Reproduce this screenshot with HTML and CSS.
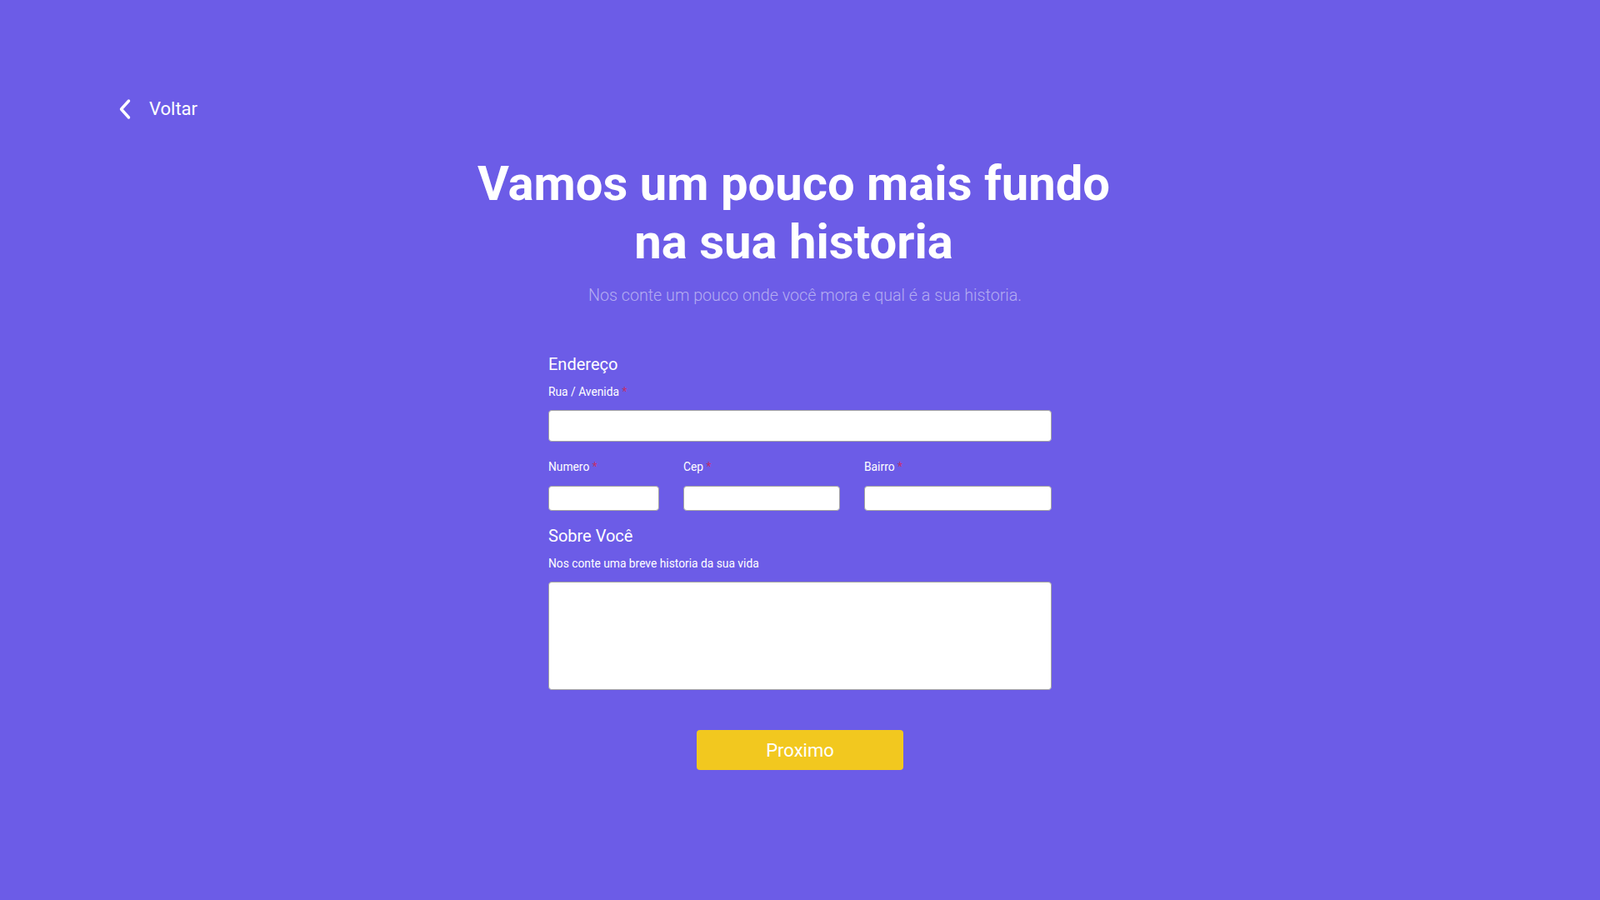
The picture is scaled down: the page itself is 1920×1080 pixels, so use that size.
FILE: index.html
```html
<!DOCTYPE html>
<html lang="pt-BR">
<head>
<meta charset="utf-8">
<title>Sua historia</title>
<link rel="stylesheet" href="styles.css">
</head>
<body>
<div class="page">
  <header class="topbar">
    <a class="back" href="#">
      <svg class="back-icon" width="16" height="26" viewBox="0 0 16 26"><path d="M12.5 3 L3.5 13 L12.5 23" fill="none" stroke="#fff" stroke-width="3.4" stroke-linecap="round" stroke-linejoin="round"/></svg>
      <span>Voltar</span>
    </a>
  </header>
  <main class="content">
    <h1 class="title">Vamos um pouco mais fundo<br>na sua historia</h1>
    <p class="subtitle">Nos conte um pouco onde você mora e qual é a sua historia.</p>
    <form class="form">
      <h2 class="section">Endereço</h2>
      <label class="label">Rua / Avenida <span class="req">*</span></label>
      <input class="input input-lg" type="text">
      <div class="row">
        <div class="field">
          <label class="label">Numero <span class="req">*</span></label>
          <input class="input input-sm" type="text">
        </div>
        <div class="field">
          <label class="label">Cep <span class="req">*</span></label>
          <input class="input input-sm" type="text">
        </div>
        <div class="field">
          <label class="label">Bairro <span class="req">*</span></label>
          <input class="input input-sm" type="text">
        </div>
      </div>
      <h2 class="section section-2">Sobre Você</h2>
      <label class="label">Nos conte uma breve historia da sua vida</label>
      <textarea class="textarea"></textarea>
      <div class="actions">
        <button class="btn" type="button">Proximo</button>
      </div>
    </form>
  </main>
</div>
</body>
</html>
```
FILE: styles.css
```css
* { box-sizing: border-box; }
html, body {
  margin: 0;
  padding: 0;
  height: 100%;
}
body {
  background: #6c5ce7;
  font-family: Roboto, "Liberation Sans", Arial, sans-serif;
  color: #fff;
}
.page {
  min-height: 1080px;
  display: flex;
  flex-direction: column;
}
.topbar {
  padding: 118px 0 0 142px;
  height: 185px;
}
.back {
  display: inline-flex;
  align-items: center;
  gap: 21px;
  color: #fff;
  text-decoration: none;
  font-size: 22px;
  line-height: 26px;
}
.back-icon { display: block; }
.content {
  display: flex;
  flex-direction: column;
  align-items: center;
}
.title {
  margin: 0;
  padding-right: 15px;
  font-size: 58px;
  line-height: 70px;
  font-weight: 700;
  text-align: center;
}
.subtitle {
  margin: 18px 0 0;
  padding-left: 12px;
  font-size: 19.7px;
  line-height: 24px;
  font-weight: 300;
  color: #b4acf2;
}
.form {
  width: 604px;
  margin-top: 58px;
  display: flex;
  flex-direction: column;
}
.section {
  margin: 0;
  font-size: 20px;
  line-height: 24px;
  font-weight: 400;
}
.section-2 { margin-top: 18px; }
.label {
  display: block;
  margin-top: 12px;
  font-size: 13.8px;
  line-height: 18px;
  font-weight: 400;
}
.req { color: #c0306b; }
.input, .textarea {
  display: block;
  width: 100%;
  background: #fff;
  border: 1px solid #a3a3a3;
  border-radius: 4px;
  font-family: inherit;
  outline: none;
}
.input-lg {
  height: 38px;
  margin-top: 13px;
}
.row {
  display: grid;
  grid-template-columns: 133px 188px 1fr;
  column-gap: 29px;
  margin-top: 9px;
}
.field .label { margin-top: 12px; }
.input-sm {
  height: 30px;
  margin-top: 14px;
}
.textarea {
  height: 130px;
  margin-top: 13px;
  resize: none;
}
.actions {
  display: flex;
  justify-content: center;
  margin-top: 48px;
}
.btn {
  width: 248px;
  height: 48px;
  border: none;
  border-radius: 4px;
  background: #f2c81f;
  color: #fff;
  font-family: inherit;
  font-size: 22px;
}
```
